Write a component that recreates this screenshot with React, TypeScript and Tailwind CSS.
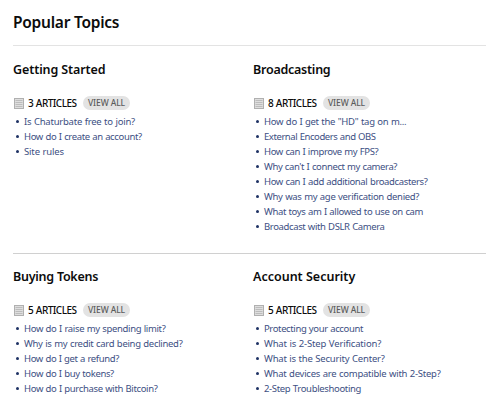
type Link = { text: string; tracking: string };
type Topic = { title: string; tracking: string; links: Link[] };

const topRow: Topic[] = [
  {
    title: 'Getting Started',
    tracking: 'tracking-[-0.1px]',
    links: [
      { text: 'Is Chaturbate free to join?', tracking: 'tracking-[-0.23px]' },
      { text: 'How do I create an account?', tracking: 'tracking-[-0.37px]' },
      { text: 'Site rules', tracking: 'tracking-[-0.15px]' },
    ],
  },
  {
    title: 'Broadcasting',
    tracking: 'tracking-[-0.25px]',
    links: [
      { text: 'How do I get the "HD" tag on m...', tracking: 'tracking-[-0.28px]' },
      { text: 'External Encoders and OBS', tracking: 'tracking-[-0.43px]' },
      { text: 'How can I improve my FPS?', tracking: 'tracking-[-0.38px]' },
      { text: "Why can't I connect my camera?", tracking: 'tracking-[-0.39px]' },
      { text: 'How can I add additional broadcasters?', tracking: 'tracking-[-0.37px]' },
      { text: 'Why was my age verification denied?', tracking: 'tracking-[-0.31px]' },
      { text: 'What toys am I allowed to use on cam', tracking: 'tracking-[-0.36px]' },
      { text: 'Broadcast with DSLR Camera', tracking: 'tracking-[-0.37px]' },
    ],
  },
];

const bottomRow: Topic[] = [
  {
    title: 'Buying Tokens',
    tracking: 'tracking-[-0.25px]',
    links: [
      { text: 'How do I raise my spending limit?', tracking: 'tracking-[-0.34px]' },
      { text: 'Why is my credit card being declined?', tracking: 'tracking-[-0.3px]' },
      { text: 'How do I get a refund?', tracking: 'tracking-[-0.38px]' },
      { text: 'How do I buy tokens?', tracking: 'tracking-[-0.36px]' },
      { text: 'How do I purchase with Bitcoin?', tracking: 'tracking-[-0.35px]' },
    ],
  },
  {
    title: 'Account Security',
    tracking: 'tracking-normal',
    links: [
      { text: 'Protecting your account', tracking: 'tracking-[-0.38px]' },
      { text: 'What is 2-Step Verification?', tracking: 'tracking-[-0.17px]' },
      { text: 'What is the Security Center?', tracking: 'tracking-[-0.2px]' },
      { text: 'What devices are compatible with 2-Step?', tracking: 'tracking-[-0.25px]' },
      { text: '2-Step Troubleshooting', tracking: 'tracking-[-0.34px]' },
    ],
  },
];

function ArticleIcon() {
  return (
    <svg width="10" height="11" viewBox="0 0 10 11" className="shrink-0">
      <rect x="0.5" y="0.5" width="9" height="10" fill="#dedede" stroke="#b0b0b0" />
      <path d="M1.5 2.5h7M1.5 4.5h7M1.5 6.5h7M1.5 8.5h7" stroke="#bcbcbc" />
    </svg>
  );
}

function TopicSection({ title, tracking, links }: Topic) {
  return (
    <section className="flex w-60 shrink-0 flex-col whitespace-nowrap">
      <h2 className={`h-5 text-[12.5px] leading-5 font-semibold text-[#0c0c0c] ${tracking}`}>{title}</h2>
      <div className="mt-[15px] flex h-4 items-center pl-px">
        <ArticleIcon />
        <span className="ml-1 w-[55px] text-[10px] leading-4 font-medium tracking-[-0.5px] [word-spacing:0.5px] text-[#0c0c0c]">
          {links.length} ARTICLES
        </span>
        <button className="flex h-3.5 w-[47px] items-center justify-center rounded-full bg-[#e3e3e3] text-[8.5px] leading-none font-medium tracking-[-0.1px] text-[#5c5c5c]">
          VIEW ALL
        </button>
      </div>
      <ul className="mt-[3px]">
        {links.map((link) => (
          <li key={link.text} className="flex h-[15px] items-center pl-[3px] text-[9.5px] leading-[15px] text-[#3d4f83]">
            <span className="mr-[5px] size-[3px] rounded-full bg-[#1f3264]" />
            <a className={`[word-spacing:0.4px] ${link.tracking}`}>{link.text}</a>
          </li>
        ))}
      </ul>
    </section>
  );
}

export default function App() {
  return (
    <main className="h-[413px] w-[500px] overflow-hidden bg-white pt-3 pr-3.5 pl-[13px] font-['Noto_Sans',sans-serif]">
      <h1 className="h-[33px] text-[15.5px] leading-[21px] font-semibold tracking-[-0.25px] text-[#0c0c0c]">
        Popular Topics
      </h1>
      <div className="flex h-[208px] border-t border-[#e3e3e3] pt-3.5">
        {topRow.map((topic) => (
          <TopicSection key={topic.title} {...topic} />
        ))}
      </div>
      <div className="flex border-t border-[#d0d0d0] pt-[13px]">
        {bottomRow.map((topic) => (
          <TopicSection key={topic.title} {...topic} />
        ))}
      </div>
    </main>
  );
}
